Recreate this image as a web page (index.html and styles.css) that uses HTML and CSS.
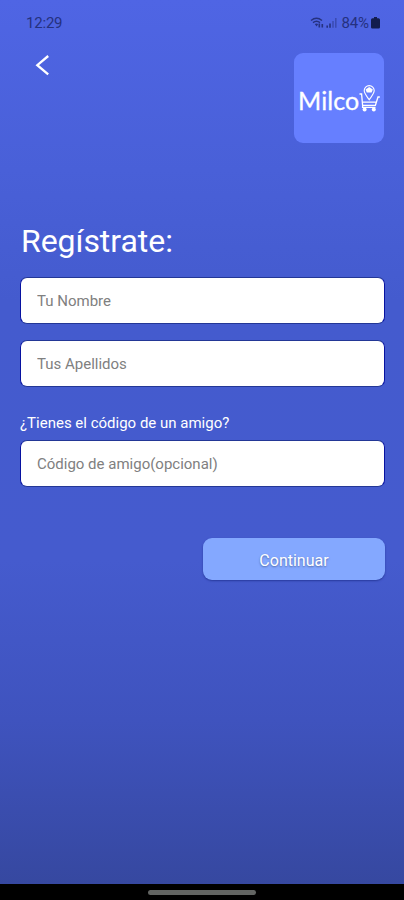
FILE: index.html
```
<!DOCTYPE html>
<html lang="es">
<head>
<meta charset="utf-8">
<meta name="viewport" content="width=device-width, initial-scale=1">
<title>Milco</title>
<link rel="stylesheet" href="styles.css">
</head>
<body>
<div class="screen">
  <div class="status">
    <span class="clock">12:29</span>
    <div class="indicators">
      <svg class="signals" width="30" height="14" viewBox="0 0 30 14" fill="none" stroke="currentColor">
        <path d="M1 4.5Q6.5 0 12 4.5M3 6.6Q6.5 3.8 10 6.6" stroke-width="1.4"/>
        <path d="M4.8 8Q6.5 7 8.2 8L6.6 10.5Z" fill="currentColor" stroke="none"/>
        <path d="M9.3 7.5v4M12.3 8v3.5" stroke-width="1.6"/>
        <path d="M17.2 9.5v2.2M20 7.5v4.2" stroke-width="1.6"/>
        <path d="M23 5v6.7M25.8 2v9.7" stroke-width="1.5" opacity=".5"/>
      </svg>
      <span class="percent">84%</span>
      <svg class="battery" width="9" height="12" viewBox="0 0 9 12" fill="currentColor"><path d="M3 0h3v1.3h1.5Q9 1.3 9 2.8v7.5Q9 11.5 7.6 11.5H1.4Q0 11.5 0 10.3V2.8Q0 1.3 1.5 1.3H3Z"/></svg>
    </div>
  </div>
  <header class="header">
    <svg class="back" width="16" height="22" viewBox="0 0 16 22"><path d="M13.2 2L2.3 11.2L13.2 20.4" fill="none" stroke="#fff" stroke-width="2.3"/></svg>
    <div class="logo">
      <span class="brand">Milco</span>
      <svg class="cart" width="21" height="29" viewBox="0 0 21 29" fill="none" stroke="#fff" stroke-width="1.3">
        <path d="M.5 10H2.6L3.6 21.3H16.4L19 13H20.8M4 18.2H16.8M3.6 21.3V23.3H16.5"/>
        <path d="M10.2 15.8C8.5 13.1 5.2 9.7 5.2 6.6A5 5 0 0 1 15.2 6.6C15.2 9.7 11.9 13.1 10.2 15.8Z" stroke-width="1.1"/>
        <path d="M6.6 5.6L10.2 3L13.8 5.6L12.6 8.6H7.8Z" fill="#fff" stroke="none"/>
        <circle cx="5.6" cy="25.6" r="2" fill="#fff" stroke="none"/><circle cx="14.8" cy="25.6" r="2" fill="#fff" stroke="none"/>
      </svg>
    </div>
  </header>
  <main class="form">
    <h1 class="title">Regístrate:</h1>
    <input class="field" type="text" placeholder="Tu Nombre">
    <input class="field" type="text" placeholder="Tus Apellidos">
    <label class="label" for="code">¿Tienes el código de un amigo?</label>
    <input class="field" id="code" type="text" placeholder="Código de amigo(opcional)">
    <button class="submit" type="button">Continuar</button>
  </main>
  <footer class="navbar"><div class="handle"></div></footer>
</div>
</body>
</html>
```
FILE: styles.css
```
* { box-sizing: border-box; }
body { margin: 0; font-family: Roboto, "Liberation Sans", sans-serif; }
.screen {
  height: 900px;
  display: flex;
  flex-direction: column;
  overflow: hidden;
  background: linear-gradient(#4f65e4 0, #4960d8 170px, #445bce 300px, #455bce 560px, #3f53be 720px, #3648a0 884px);
}
.status {
  height: 46px;
  padding: 0 24px 0 26px;
  display: flex;
  align-items: center;
  justify-content: space-between;
  color: #25317f;
  font-size: 15px;
}
.clock { letter-spacing: -.2px; }
.indicators { display: flex; align-items: center; }
.signals { margin-right: 1px; }
.percent { letter-spacing: -.1px; margin-right: 2px; }
.battery { color: #131d4d; margin-top: -1px; }
.header {
  height: 97px;
  padding: 7px 20px 0 35px;
  display: flex;
  align-items: flex-start;
  justify-content: space-between;
}
.back { margin-top: 1px; }
.logo {
  width: 90px;
  height: 90px;
  border-radius: 9px;
  background: #667fff;
  display: flex;
  align-items: center;
  padding-left: 4px;
  color: #fff;
}
.brand {
  width: 61px;
  font: 400 25px/30px Lato, sans-serif;
  letter-spacing: .1px;
  margin-top: 4px;
  -webkit-text-stroke: .3px #fff;
}
.cart { flex: none; }
.form {
  flex: 1;
  padding: 78px 19px 0 20px;
  display: flex;
  flex-direction: column;
}
.title {
  margin: 0 0 16px 1px;
  font-size: 32px;
  line-height: 40px;
  font-weight: 400;
  letter-spacing: -.05px;
  color: #fff;
}
.field {
  width: 100%;
  height: 47px;
  flex: none;
  margin: 0 0 16px;
  padding: 0 15px 0 16px;
  border: 1px solid #233796;
  border-left-color: #0712a0;
  border-right-color: #0712a0;
  border-radius: 7px;
  background: #fff;
  font: 400 15px Roboto, sans-serif;
}
.field::placeholder { color: #808080; opacity: 1; }
.label {
  margin-top: 10px;
  height: 27px;
  line-height: 20px;
  font-size: 15px;
  color: #fff;
}
.submit {
  align-self: flex-end;
  width: 182px;
  height: 42px;
  margin-top: 35px;
  padding: 2px 0 0;
  border: 0;
  border-radius: 9px;
  background: #84a8ff;
  box-shadow: 0 1px 2px #273a9c;
  color: #fff;
  font: 400 16px Roboto, sans-serif;
  text-shadow: 0 1px 2px #5068a8;
}
.navbar {
  height: 16px;
  background: #000;
  display: flex;
  justify-content: center;
  align-items: center;
}
.handle { width: 108px; height: 5px; border-radius: 3px; background: #626462; }
```
